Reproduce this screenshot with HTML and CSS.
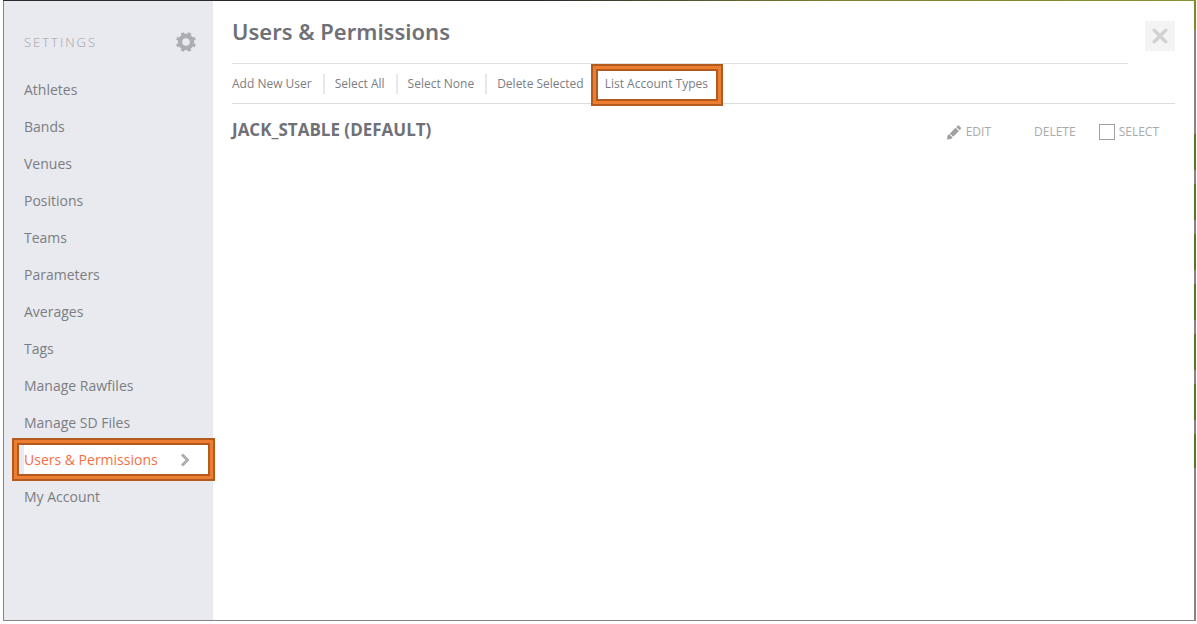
FILE: index.html
```
<!DOCTYPE html>
<html lang="en">
<head>
    <meta charset="UTF-8">
    <meta name="viewport" content="width=device-width, initial-scale=1.0">
    <title>Settings - Users &amp; Permissions</title>
    <link rel="stylesheet" href="styles.css">
</head>
<body>
    <div class="window">
        <aside class="sidebar">
            <div class="sidebar-header">
                <h2>SETTINGS</h2>
                <svg class="gear" viewBox="0 0 20 20" aria-hidden="true">
                    <circle cx="10" cy="10" r="6" stroke-width="4.400" />
                    <circle cx="10" cy="10" r="8.700" stroke-width="2.600" pathLength="16" stroke-dasharray="1 1" stroke-dashoffset="-0.5" />
                </svg>
            </div>
            <nav>
                <ul class="menu">
                    <li><a href="#">Athletes</a></li>
                    <li><a href="#">Bands</a></li>
                    <li><a href="#">Venues</a></li>
                    <li><a href="#">Positions</a></li>
                    <li><a href="#">Teams</a></li>
                    <li><a href="#">Parameters</a></li>
                    <li><a href="#">Averages</a></li>
                    <li><a href="#">Tags</a></li>
                    <li><a href="#">Manage Rawfiles</a></li>
                    <li><a href="#">Manage SD Files</a></li>
                    <li class="active highlight">
                        <a href="#">
                            Users &amp; Permissions
                            <svg class="chevron" viewBox="0 0 10 14" aria-hidden="true"><path d="M2 1.500 7.500 7 2 12.500" /></svg>
                        </a>
                    </li>
                    <li><a href="#">My Account</a></li>
                </ul>
            </nav>
        </aside>

        <main class="content">
            <header class="page-header">
                <h1>Users &amp; Permissions</h1>
                <button class="close" type="button" aria-label="Close">
                    <svg viewBox="0 0 14 14" aria-hidden="true"><path d="M2 2 12 12M12 2 2 12" /></svg>
                </button>
            </header>

            <div class="toolbar">
                <button type="button">Add New User</button>
                <button type="button">Select All</button>
                <button type="button">Select None</button>
                <button type="button">Delete Selected</button>
                <button type="button" class="highlight">List Account Types</button>
            </div>

            <section class="user">
                <h3>JACK_STABLE (DEFAULT)</h3>
                <div class="user-actions">
                    <button type="button" class="edit">
                        <svg class="pencil" viewBox="0 0 14 15" aria-hidden="true">
                            <path d="M0 14.500 .5 10.800 2.200 9.100 5.500 12.400 3.800 14zM2.900 8.400 8.600 2.700 11.900 6 6.200 11.700zM9.300 2 10.600.7Q11.300 0 12 .7L13.800 2.500Q14.400 3.200 13.800 3.900L12.600 5.300z" />
                        </svg>
                        EDIT
                    </button>
                    <button type="button" class="delete">DELETE</button>
                    <label class="select"><input type="checkbox">SELECT</label>
                </div>
            </section>
        </main>
    </div>
</body>
</html>
```
FILE: styles.css
```
* {
    margin: 0;
    padding: 0;
    box-sizing: border-box;
}

body {
    font-family: "Segoe UI", "Open Sans", sans-serif;
    background: #fff;
    min-height: 100vh;
    padding: 0 1px 3px 3px;
    display: flex;
    color: #7c7d82;
}

button {
    font: inherit;
    color: inherit;
    background: none;
    border: none;
    cursor: pointer;
}

.window {
    flex: 1;
    display: flex;
    padding: 1px 2px 1px 1px;
    background:
        linear-gradient(90deg, #2c292c 45%, #7d8030 70%, #8b9230) top / 100% 1px no-repeat,
        linear-gradient(#7c8a2a 30px, #858585 30px 134px, #527a26 134px 170px, transparent 170px 468px, #858585 468px) right / 2px 100% no-repeat,
        repeating-linear-gradient(#858585 0 14px, #527a26 14px 50px) right 170px / 2px 298px no-repeat,
        #858585;
}

.sidebar {
    width: 209px;
    flex-shrink: 0;
    background: #e8eaef;
}

.sidebar-header {
    display: flex;
    align-items: center;
    justify-content: space-between;
    padding: 30px 17px 18px 20px;
}

.sidebar-header h2 {
    font-size: 13px;
    line-height: 22px;
    font-weight: 300;
    letter-spacing: 2px;
    color: #a0a2a8;
}

.gear {
    width: 20px;
    height: 20px;
    fill: none;
    stroke: #abadb3;
}

.menu {
    list-style: none;
}

.menu li {
    position: relative;
    height: 37px;
    padding: 3px 0 3px 20px;
}

.menu a {
    display: flex;
    align-items: center;
    justify-content: space-between;
    height: 31px;
    padding-right: 23px;
    font-size: 14px;
    color: inherit;
    text-decoration: none;
}

.menu .active a {
    background: #fff;
    color: #f4703f;
}

.chevron {
    width: 10px;
    height: 14px;
    fill: none;
    stroke: #afafb1;
    stroke-width: 3;
}

.highlight {
    position: relative;
}

/* callout frame drawn over the item */
.highlight::after {
    content: '';
    position: absolute;
    inset: -3px -2px -3px 8px;
    border: 2px solid #b35a1f;
    box-shadow: inset 0 0 0 3px #ed7d31, inset 0 0 0 5px #b35a1f;
    pointer-events: none;
}

.content {
    flex: 1;
    background: #fff;
    padding: 0 19px 20px 19px;
}

.page-header {
    display: flex;
    justify-content: space-between;
    height: 63px;
    padding-top: 14px;
    background: linear-gradient(#dfdfdf, #dfdfdf) left bottom / calc(100% - 47px) 1px no-repeat;
}

.page-header h1 {
    font-family: "Trebuchet MS", "Noto Sans", sans-serif;
    font-size: 22px;
    line-height: 32px;
    font-weight: 600;
    color: #707178;
}

.close {
    width: 30px;
    height: 30px;
    margin-top: 6px;
    background: #f4f4f4;
}

.close svg {
    display: block;
    width: 16px;
    margin: 0 auto;
    fill: none;
    stroke: #d2d2d2;
    stroke-width: 3;
    stroke-linecap: round;
}

.toolbar {
    display: flex;
    align-items: center;
    height: 40px;
    border-bottom: 1px solid #dcdcdc;
}

.toolbar button {
    height: 20px;
    padding: 0 11px 0 10px;
    font-size: 12px;
    line-height: 20px;
    border-left: 2px solid #e8e8e8;
}

.toolbar button:first-child {
    padding-left: 0;
    border-left: none;
}

.toolbar .highlight {
    border-left: none;
}

.toolbar .highlight::after {
    inset: -10px -4px -12px -4px;
}

.user {
    display: flex;
    justify-content: space-between;
    padding: 14px 16px 0 0;
}

.user h3 {
    font-size: 17px;
    line-height: 24px;
    font-weight: 700;
    color: #707178;
}

.user-actions {
    display: flex;
    align-items: center;
    padding-top: 4px;
    font-size: 12px;
    line-height: 20px;
    color: #a9a9ab;
}

.edit {
    display: flex;
    align-items: center;
    gap: 5px;
}

.pencil {
    width: 14px;
    height: 15px;
    fill: #a0a0a2;
}

.delete {
    margin: 0 23px 0 43px;
}

.select {
    display: flex;
    align-items: center;
    gap: 4px;
}

.select input {
    appearance: none;
    width: 16px;
    height: 16px;
    border: 1px solid #a0a0a2;
}
```
